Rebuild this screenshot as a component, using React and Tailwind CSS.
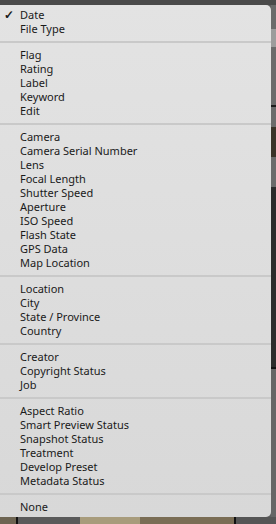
import React from 'react';

const groups = [
  ['Date', 'File Type'],
  ['Flag', 'Rating', 'Label', 'Keyword', 'Edit'],
  [
    'Camera',
    'Camera Serial Number',
    'Lens',
    'Focal Length',
    'Shutter Speed',
    'Aperture',
    'ISO Speed',
    'Flash State',
    'GPS Data',
    'Map Location',
  ],
  ['Location', 'City', 'State / Province', 'Country'],
  ['Creator', 'Copyright Status', 'Job'],
  [
    'Aspect Ratio',
    'Smart Preview Status',
    'Snapshot Status',
    'Treatment',
    'Develop Preset',
    'Metadata Status',
  ],
  ['None'],
];

const MenuItem = ({ label, checked }) => (
  <div className="flex h-[14px] items-center leading-[14px] text-[11px] text-[#1a1a1a]">
    <span className="w-[20px] pl-[4px] text-[12px] font-bold">{checked ? '✓' : ''}</span>
    <span>{label}</span>
  </div>
);

export default function App() {
  return (
    <div
      className="flex flex-col w-[276px] h-[524px] overflow-hidden bg-[#5e5e5e]"
      style={{ fontFamily: '"Noto Sans", "Open Sans", sans-serif' }}
    >
      {/* panel header peeking out above the menu */}
      <div className="h-[5px] bg-[#4a4a4a] overflow-hidden" />

      <div className="flex h-[512px]">
        <div className="w-[271px] rounded-r-[5px] bg-gradient-to-b from-[#e3e3e3] to-[#d8d8d8] py-[3px]">
          {groups.map((items, gi) => (
            <div key={gi}>
              {gi > 0 && (
                <div className="py-[5px]">
                  <div className="h-[2px] bg-[#c9c9c9]" />
                </div>
              )}
              {items.map((label) => (
                <MenuItem key={label} label={label} checked={label === 'Date'} />
              ))}
            </div>
          ))}
        </div>

        {/* grid thumbnails edge behind the menu */}
        <div className="flex flex-col w-[5px]">
          <div className="h-[24px] bg-[#6b6b6b]" />
          <div className="h-[18px] bg-[#9c9c9c]" />
          <div className="h-[58px] bg-[#6b6b6b]" />
          <div className="h-[2px] bg-[#1c1c1c]" />
          <div className="h-[20px] bg-[#6b6b6b]" />
          <div className="h-[30px] bg-[#3a3328]" />
          <div className="h-[30px] bg-[#6b6b6b]" />
          <div className="h-[180px] bg-[#2c2c2c]" />
          <div className="h-[2px] bg-[#111]" />
          <div className="flex-1 bg-[#666]" />
        </div>
      </div>

      {/* thumbnail strip below */}
      <div className="flex flex-1 bg-[#6d6452]">
        <div className="w-[16px]" />
        <div className="w-[2px] bg-[#111]" />
        <div className="w-[62px] bg-[#5a5a5a]" />
        <div className="w-[60px] bg-[#a89c7c]" />
        <div className="w-[94px] bg-[#7a6d55]" />
        <div className="w-[2px] bg-[#111]" />
        <div className="flex-1 bg-[#555]" />
      </div>
    </div>
  );
}
